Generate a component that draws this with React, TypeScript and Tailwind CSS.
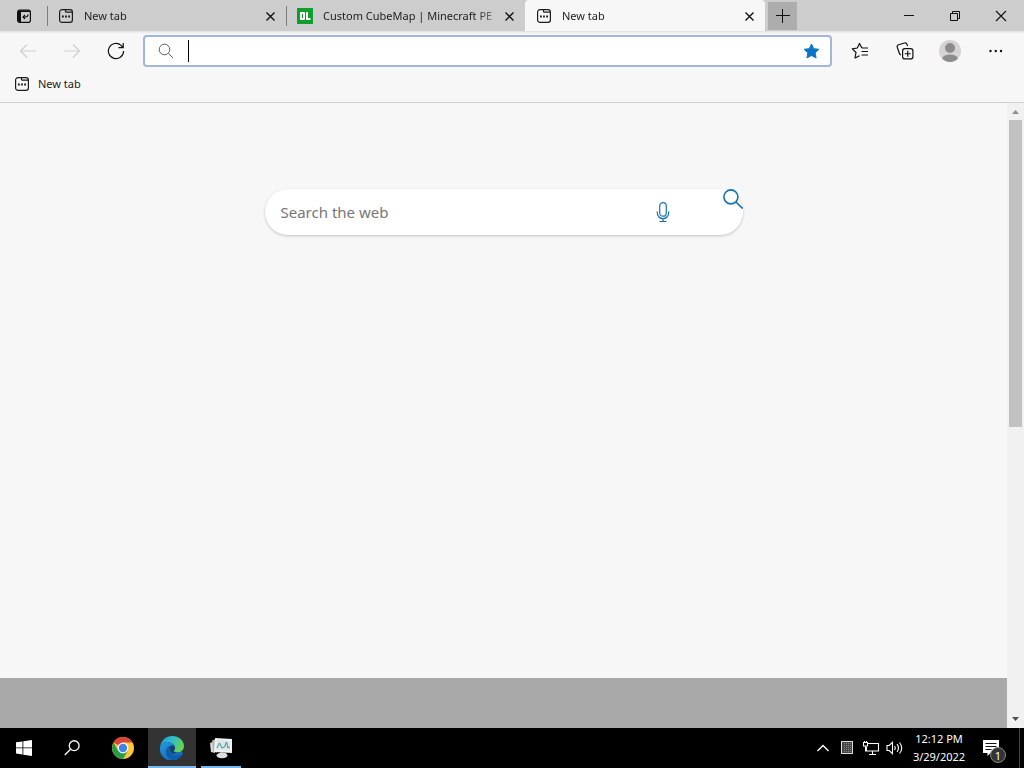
import React from "react";

function NewTabIcon() {
  return (
    <svg width="16" height="16" viewBox="0 0 16 16" fill="none" stroke="#1b1b1b" strokeWidth="1.2" className="shrink-0" aria-hidden="true">
      <rect x="1.6" y="1.6" width="12.8" height="12.8" rx="2.4" />
      <path d="M7.5 1.600v1.600a1 1 0 0 0 1 1h5.700" />
      <path d="M4 8.500h1.800M7.100 8.500h1.800M10.200 8.500h1.800" strokeWidth="1.800" />
    </svg>
  );
}

function CloseIcon() {
  return (
    <svg width="16" height="16" viewBox="0 0 16 16" fill="none" stroke="#111" strokeWidth="1.4" aria-hidden="true">
      <path d="M4.500 4.500l8 8M12.500 4.500l-8 8" />
    </svg>
  );
}

type TabProps = {
  title: string;
  icon: React.ReactNode;
  className: string;
};

function Tab({ title, icon, className }: TabProps) {
  return (
    <div className={"flex min-w-0 items-center pr-2 " + className}>
      <button type="button" role="tab" className="flex min-w-0 flex-1 items-center gap-[10px] text-left">
        {icon}
        <span className="min-w-0 flex-1 overflow-hidden whitespace-nowrap text-[11px] leading-4 [mask-image:linear-gradient(to_right,black_88%,#0006)]">
          {title}
        </span>
      </button>
      <button type="button" aria-label={"Close " + title} className="ml-[5px] shrink-0">
        <CloseIcon />
      </button>
    </div>
  );
}

function TabStrip() {
  return (
    <header className="flex h-[31px] items-stretch bg-[#cdcdcd] shadow-[0_1px_2px_#dadada]">
      <button type="button" aria-label="Tab actions" className="flex w-[47px] shrink-0 items-center justify-center">
        <svg width="16" height="16" viewBox="0 0 16 16" fill="none" stroke="#111" strokeWidth="1.2" aria-hidden="true">
          <rect x="1.6" y="2.100" width="12.8" height="12.300" rx="2.2" />
          <path d="M2 3h3v11H3l-1-1zM2 2.500h12v1.500H2z" fill="#111" stroke="none" />
          <path d="M12 6.500q0 2.500-2.500 2.500H7M9 7L7 9l2 2" strokeWidth="1.100" />
        </svg>
      </button>
      <div className="h-5 w-px shrink-0 self-center bg-[#7c7c7c]" />
      <Tab title="New tab" icon={<NewTabIcon />} className="w-[238px] pl-[10px]" />
      <div className="h-5 w-px shrink-0 self-center bg-[#7c7c7c]" />
      <Tab
        title="Custom CubeMap | Minecraft PE"
        icon={
          <svg width="16" height="16" viewBox="0 0 16 16" className="shrink-0" aria-hidden="true">
            <rect width="16" height="16" fill="#0f9f2f" />
            <path fillRule="evenodd" d="M3 4h4.200L8 4.800v6.400L7.200 12H3zM5 6v4h1V6z" fill="#fff" />
            <path d="M9 4h2v6h2.500v2H9z" fill="#fff" />
          </svg>
        }
        className="w-[238px] pl-[10px]"
      />
      <Tab title="New tab" icon={<NewTabIcon />} className="w-[240px] rounded-t bg-[#f7f7f7] pl-[11px]" />
      <button type="button" aria-label="Open new tab" className="ml-[3px] mt-[2px] flex h-7 w-[29px] shrink-0 items-center justify-center bg-[#adadad]">
        <svg width="16" height="16" viewBox="0 0 16 16" fill="none" stroke="#111" aria-hidden="true">
          <path d="M1 7.500h14M7.500 1v14" />
        </svg>
      </button>
      <div className="ml-auto flex shrink-0 items-center">
        <button type="button" aria-label="Minimize" className="flex h-7 w-[46px] items-center justify-center">
          <svg width="12" height="12" fill="none" stroke="#111" aria-hidden="true"><path d="M1 5.500h10" /></svg>
        </button>
        <button type="button" aria-label="Restore" className="flex h-7 w-[46px] items-center justify-center">
          <svg width="12" height="12" fill="none" stroke="#111" aria-hidden="true"><path d="M1.500 3.500h7v7h-7zM3.500 3.500v-2h7v7h-2" /></svg>
        </button>
        <button type="button" aria-label="Close window" className="flex h-7 w-[46px] items-center justify-center">
          <svg width="12" height="12" fill="none" stroke="#111" strokeWidth="1.1" aria-hidden="true"><path d="M1 1l10 10M11 1L1 11" /></svg>
        </button>
      </div>
    </header>
  );
}

function Toolbar() {
  const tool = "flex h-8 w-[45px] shrink-0 items-center justify-center";
  const nav = "flex h-8 w-11 shrink-0 items-center justify-center";
  return (
    <div className="flex h-10 items-center pl-[6px] pr-[7px]">
      <button type="button" aria-label="Back" className={nav}>
        <svg width="18" height="18" viewBox="0 0 18 18" fill="none" stroke="#cfcfcf" strokeWidth="1.2" aria-hidden="true"><path d="M17 9H1.500M8 2.500L1.500 9 8 15.500" /></svg>
      </button>
      <button type="button" aria-label="Forward" className={nav}>
        <svg width="18" height="18" viewBox="0 0 18 18" fill="none" stroke="#cfcfcf" strokeWidth="1.2" aria-hidden="true"><path d="M1 9h15.500M10 2.500L16.500 9 10 15.500" /></svg>
      </button>
      <button type="button" aria-label="Refresh" className={nav}>
        <svg width="18" height="18" viewBox="0 0 18 18" fill="none" stroke="#111" strokeWidth="1.2" aria-hidden="true">
          <path d="M16.600 9a7.600 7.600 0 1 1-2.300-5.400L16 5.500M16.200 1v4.700h-4.700" />
        </svg>
      </button>
      <div className="ml-[5px] mr-[5px] flex h-8 min-w-0 flex-1 items-center rounded-[4px] border-2 border-[#a2b6dc] bg-white">
        <svg width="16" height="16" viewBox="0 0 16 16" fill="none" stroke="#5c5c5c" className="ml-[13px] shrink-0" aria-hidden="true">
          <circle cx="6.500" cy="6.500" r="5.300" /><path d="M10.400 10.400L15 15" />
        </svg>
        <div className="ml-[14px] h-[22px] w-px shrink-0 bg-black" />
        <input type="text" aria-label="Address bar" className="h-7 min-w-0 flex-1 bg-transparent pl-px text-sm outline-none" />
        <button type="button" aria-label="Edit favorite" className="mr-[10px] shrink-0">
          <svg width="17" height="16" viewBox="0 0 17 16" fill="#0c74c4" stroke="#0c74c4" strokeLinejoin="round" aria-hidden="true">
            <path d="M8.500 1l2.200 4.700 5.200.6-3.800 3.500 1 5.200-4.600-2.600L3.900 15l1-5.200L1.100 6.300l5.200-.6z" />
          </svg>
        </button>
      </div>
      <button type="button" aria-label="Favorites" className={tool}>
        <svg width="18" height="18" viewBox="0 0 18 18" fill="none" stroke="#111" strokeWidth="1.2" strokeLinejoin="round" aria-hidden="true">
          <path d="M11.500 6L10.600 5.500 8.500 1.400 6.300 6 1.300 6.800l3.700 3.700-1 5.500 4.500-2.300M11 6h6M10.500 9.500H17M10.500 13H17" />
        </svg>
      </button>
      <button type="button" aria-label="Collections" className={tool}>
        <svg width="18" height="18" viewBox="0 0 18 18" fill="none" stroke="#111" strokeWidth="1.2" strokeLinejoin="round" aria-hidden="true">
          <path d="M5 13A2.500 2.500 0 0 1 3.300 11.200L1.300 5.300a2 2 0 0 1 1.300-2.500L8.500 1a2 2 0 0 1 2.500 1.300l.6 1.700" />
          <rect x="6.600" y="6.600" width="10.300" height="10.300" rx="2.200" fill="#f7f7f7" />
          <path d="M11.750 8.700v6M8.700 11.750h6" />
        </svg>
      </button>
      <button type="button" aria-label="Profile" className={tool}>
        <svg width="22" height="22" viewBox="0 0 22 22" aria-hidden="true">
          <circle cx="11" cy="11" r="11" fill="#d5d3d3" />
          <circle cx="11" cy="8" r="5" fill="#8d8b8b" />
          <path d="M3 18.500C4.500 15.500 7 14.500 11 14.500s6.500 1 8 4A11 11 0 0 1 11 22a11 11 0 0 1-8-3.500z" fill="#8d8b8b" />
        </svg>
      </button>
      <button type="button" aria-label="Settings and more" className={tool}>
        <svg width="16" height="16" viewBox="0 0 16 16" fill="#111" aria-hidden="true">
          <circle cx="3.500" cy="8" r="1.200" /><circle cx="8.750" cy="8" r="1.200" /><circle cx="14" cy="8" r="1.200" />
        </svg>
      </button>
    </div>
  );
}

function SearchForm() {
  return (
    <form
      role="search"
      onSubmit={(e) => e.preventDefault()}
      className="mx-auto flex h-[46px] w-[478px] max-w-full items-start rounded-full bg-white shadow-[0_1px_3px_rgba(0,0,0,0.22)]"
    >
      <input
        type="text"
        aria-label="Search the web"
        placeholder="Search the web"
        className="h-full min-w-0 flex-1 bg-transparent pl-4 text-[15px] outline-none placeholder:text-[#767676]"
      />
      <button type="button" aria-label="Search by voice" className="flex h-full w-6 shrink-0 items-center justify-center">
        <svg width="16" height="22" viewBox="0 0 16 22" fill="none" stroke="#1473b0" strokeWidth="1.200" aria-hidden="true">
          <rect x="4.700" y="1.600" width="6.600" height="13.600" rx="3.300" />
          <path d="M2.300 10.500v1.500a5.700 5.700 0 0 0 11.400 0v-1.500M8 17.700v2.800M4.500 20.500h7" />
        </svg>
      </button>
      <button type="submit" aria-label="Search" className="ml-12 shrink-0">
        <svg width="20" height="20" viewBox="0 0 20 20" fill="none" stroke="#1473b0" strokeWidth="1.600" aria-hidden="true">
          <circle cx="7.900" cy="7.900" r="7" /><path d="M13 13l6.600 6.600" />
        </svg>
      </button>
    </form>
  );
}

function Page() {
  return (
    <main className="flex flex-1 bg-[#f7f7f7]">
      <div className="flex min-w-0 flex-1 flex-col justify-between pt-[86px]">
        <SearchForm />
        <div className="h-[50px] bg-[#a9a9a9]" />
      </div>
      <div className="flex w-[17px] shrink-0 flex-col items-center bg-[#f1f1f1]" aria-hidden="true">
        <svg width="17" height="17" fill="#8f8f8f" className="shrink-0"><path d="M5 11l3.500-4 3.500 4z" /></svg>
        <div className="flex w-[13px] flex-1 flex-col">
          <div className="h-[52%] bg-[#c1c1c1]" />
        </div>
        <svg width="17" height="17" fill="#505050" className="shrink-0"><path d="M5 6h7l-3.500 4z" /></svg>
      </div>
    </main>
  );
}

function Taskbar() {
  return (
    <footer className="flex h-10 items-stretch bg-black text-white">
      <button type="button" aria-label="Start" className="flex w-12 items-center justify-center">
        <svg width="16" height="16" viewBox="0 0 16 16" fill="#fff" aria-hidden="true">
          <path d="M0 2.300l6.500-.9v6.100H0zM7.300 1.300L16 0v7.500H7.300zM0 8.300h6.500v6.200L0 13.600zM7.300 8.300H16V16l-8.700-1.300z" />
        </svg>
      </button>
      <button type="button" aria-label="Search" className="flex w-12 items-center justify-center">
        <svg width="16" height="16" viewBox="0 0 17 17" fill="none" stroke="#fff" strokeWidth="1.400" aria-hidden="true">
          <circle cx="10.800" cy="6" r="5.200" /><path d="M7 9.800L.8 16" />
        </svg>
      </button>
      <button type="button" aria-label="Google Chrome" className="ml-[3px] flex w-12 items-center justify-center">
        <svg width="22" height="22" viewBox="0 0 22 22" aria-hidden="true">
          <circle cx="11" cy="11" r="11" fill="#fcc934" />
          <path d="M11 11L1.500 5.500A11 11 0 0 1 20.500 5.500H11z" fill="#dc4438" />
          <path d="M1.500 5.500A11 11 0 0 0 11 22l4.800-8.200L11 11 6.200 13.700z" fill="#279b4a" />
          <circle cx="11" cy="11" r="5.400" fill="#fff" />
          <circle cx="11" cy="11" r="4.200" fill="#4284e5" />
        </svg>
      </button>
      <button type="button" aria-label="Microsoft Edge" className="ml-px flex w-12 items-center justify-center border-b-2 border-[#76b9ed] bg-[#333333] pt-[2px]">
        <svg width="24" height="24" viewBox="0 0 24 24" aria-hidden="true">
          <defs>
            <linearGradient id="edgeTop" x1="0" y1="0" x2="1" y2="0.400">
              <stop offset="0" stopColor="#2298db" /><stop offset="0.500" stopColor="#32bcce" /><stop offset="1" stopColor="#62d255" />
            </linearGradient>
            <linearGradient id="edgeBody" x1="0" y1="0" x2="0.800" y2="1">
              <stop offset="0" stopColor="#229be0" /><stop offset="1" stopColor="#0c63b7" />
            </linearGradient>
          </defs>
          <path d="M.2 11C.8 4.500 6 0 12.200 0 19 0 24 4.800 24 10c0 4-3 6.500-6.500 6.500-2.500 0-4-1-3.700-1.800.3-.7 1.200-1 1.200-2.700C15 8.500 11 6 7.500 6 3.700 6 1 8.200.2 11z" fill="url(#edgeTop)" />
          <path d="M.1 11C1 7.500 4.200 6 7.500 6c4.200 0 7.500 2.800 7.500 6 0 1.700-.9 2-1.200 2.700-.3.800 1.200 1.800 3.700 1.800 2 0 3.500-.7 4.600-1.500l.7 3A12 12 0 0 1 .1 11z" fill="url(#edgeBody)" />
          <path d="M11.300 9.200C8 10 5.500 13.300 5.800 16c.4 4.400 3.700 7.600 7.500 7.900 3.800-.4 6.900-2.200 8.600-4.800.2-.5-.3-1-.7-.6-5 2.500-10.700.5-11.700-4.500-.3-1.700.4-3.700 1.800-4.800z" fill="#105bac" />
          <path d="M11.300 9.400c-1.500 1-2 2.800-1.700 4.400.5 2.300 2.200 3.700 4.200 4.200l3-1.600c-2.200-.1-3.300-.9-3-1.700.3-.7 1.200-1 1.200-2.700 0-1.600-1.700-3.100-3.700-2.600z" fill="#154270" />
        </svg>
      </button>
      <button type="button" aria-label="Resource Monitor" className="ml-[5px] flex w-10 items-center justify-center border-b-2 border-[#76b9ed] pt-[2px]">
        <svg width="24" height="22" viewBox="0 0 24 22" aria-hidden="true">
          <path d="M1 6l5-2v12l-4-1z" fill="#d9dcda" />
          <path d="M3 3.500l5-2v14l-4-1z" fill="#aeb4b0" />
          <path d="M6 1l17 1v14L5 15z" fill="#f1f3f0" />
          <path d="M8 3l13 1v9.500L7 12.500z" fill="#dce7e4" />
          <path d="M8 11l2.500-5 2.500 5 2.500-1L17.500 5l1.500 6 2-1" fill="none" stroke="#438fa5" strokeWidth="1" />
          <path d="M11 15h6l1 4h-7z" fill="#9fa6a4" />
          <ellipse cx="13" cy="18.500" rx="5.500" ry="2.800" fill="#dce0df" />
        </svg>
      </button>
      <div className="ml-auto flex items-center">
        <button type="button" aria-label="Show hidden icons" className="flex w-6 justify-center">
          <svg width="14" height="14" viewBox="0 0 14 14" fill="none" stroke="#fff" strokeWidth="1.400" aria-hidden="true"><path d="M1.500 10L7 4.500l5.500 5.500" /></svg>
        </button>
        <button type="button" aria-label="Touch keyboard" className="flex w-6 justify-center">
          <svg width="12" height="14" fill="none" stroke="#ddd" aria-hidden="true">
            <rect x="0.500" y="0.500" width="11" height="12" fill="#454545" />
            <path d="M3.500 2v9M5.500 2v9M7.500 2v9M9.500 2v9" stroke="#888" strokeDasharray="1 1" />
          </svg>
        </button>
        <button type="button" aria-label="Network" className="flex w-6 justify-center">
          <svg width="18" height="16" viewBox="0 0 18 16" fill="none" stroke="#fff" strokeWidth="1.100" aria-hidden="true">
            <path d="M6 3.500h10.500v7.500H4.500V7M10.500 11v3M7 14.500h7M1.500 2.500h4v3.500h-4zM3.500 6v5h1M2.500 1v1.500M4.500 1v1.500" />
          </svg>
        </button>
        <button type="button" aria-label="Volume" className="flex w-6 justify-center">
          <svg width="18" height="16" viewBox="0 0 18 16" fill="none" stroke="#fff" strokeWidth="1.100" aria-hidden="true">
            <path d="M1 5.500h2.200L6.500 2.300v11.400L3.200 10.500H1zM8.500 6q1.500 2 0 4M11 4.200q3 3.800 0 7.600M13.500 2.500q4.500 5.500 0 11" />
          </svg>
        </button>
        <button type="button" aria-label="Clock" className="w-16 text-center text-[11px] leading-[18px]">
          <div>12:12 PM</div>
          <div>3/29/2022</div>
        </button>
        <button type="button" aria-label="Notifications, 1 new" className="relative flex h-10 w-12 items-center pl-3">
          <svg width="16" height="16" viewBox="0 0 16 16" aria-hidden="true">
            <path d="M0 0h16v13H7.500L4.500 16v-3H0z" fill="#fff" />
            <path d="M2.500 3.500h11M2.500 6.500h11M2.500 9.500h6" stroke="#111" />
          </svg>
          <span className="absolute left-[19px] top-[19px] flex h-4 w-4 items-center justify-center rounded-full border border-[#888] bg-[#333] text-[11px] leading-none">1</span>
        </button>
        <div className="mr-1 h-10 w-px bg-[#484848]" />
      </div>
    </footer>
  );
}

export default function App() {
  return (
    <div className="flex min-h-screen flex-col bg-[#f7f7f7] font-['Noto_Sans','Open_Sans',sans-serif] text-[#222]">
      <TabStrip />
      <Toolbar />
      <nav aria-label="Favorites bar" className="flex h-8 items-start border-b border-[#cfcfcf] px-[14px] pt-[5px]">
        <a href="#new-tab" className="flex items-center gap-2 text-[11px] leading-4">
          <NewTabIcon />
          New tab
        </a>
      </nav>
      <Page />
      <Taskbar />
    </div>
  );
}
